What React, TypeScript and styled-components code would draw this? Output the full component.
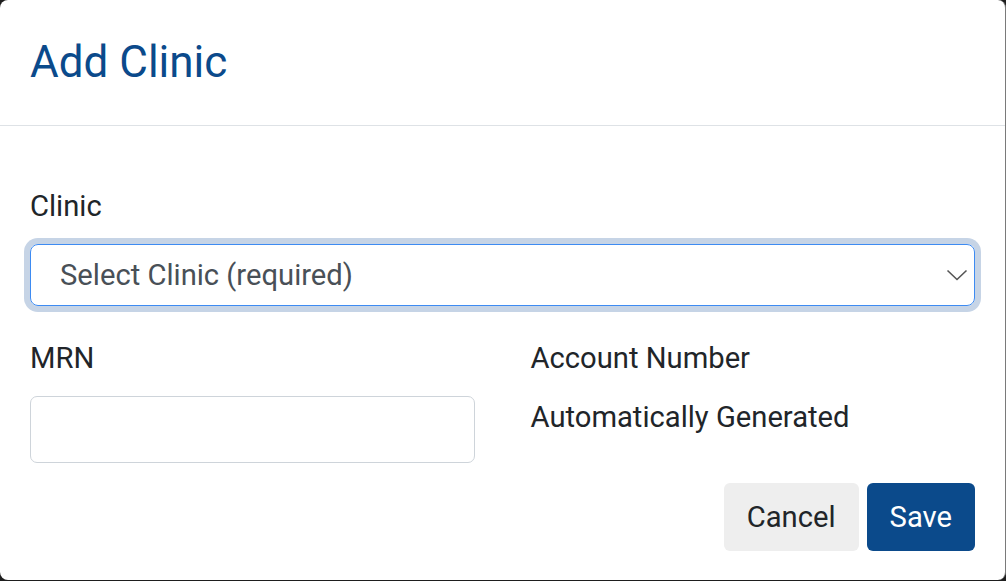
import styled, { createGlobalStyle } from "styled-components";

const GlobalStyle = createGlobalStyle`
  html, body {
    margin: 0;
    padding: 0;
    background: #1e1e1e;
  }
  body {
    font-family: Roboto, "Liberation Sans", Arial, sans-serif;
    color: #212529;
  }
  * {
    box-sizing: border-box;
  }
`;

const Backdrop = styled.div`
  width: 1006px;
  height: 581px;
  background: #1e1e1e;
`;

const Modal = styled.div`
  width: 1006px;
  height: 580px;
  background: #fff;
  border-right: 1px solid #7a7a7a;
  border-radius: 8px;
  display: flex;
  flex-direction: column;
  overflow: hidden;
`;

const Header = styled.div`
  height: 126px;
  padding: 36px 30px 0;
  border-bottom: 1px solid #dee2e6;
`;

const Title = styled.h2`
  margin: 0;
  font-size: 44px;
  font-weight: 400;
  line-height: 53px;
  color: #0b4a8b;
`;

const Body = styled.div`
  padding: 59px 30px 0 30px;
  display: flex;
  flex-direction: column;
`;

const Label = styled.label`
  display: block;
  font-size: 29.2px;
  line-height: 42px;
  color: #212529;
  margin-bottom: 17px;
`;

const SelectBox = styled.div`
  height: 62px;
  display: flex;
  align-items: center;
  justify-content: space-between;
  padding: 0 6px 0 29px;
  border: 1px solid #3d8bf2;
  border-radius: 8px;
  box-shadow: 0 0 0 6px #c6d4e6;
  font-size: 29.2px;
  color: #495057;
`;

const Row = styled.div`
  margin-top: 31px;
  display: grid;
  grid-template-columns: 1fr 1fr;
  column-gap: 56px;
`;

const Column = styled.div`
  display: flex;
  flex-direction: column;
`;

const TextInput = styled.input`
  height: 67px;
  width: 100%;
  border: 1px solid #ced4da;
  border-radius: 7px;
  padding: 0 29px;
  font-size: 29.2px;
  font-family: inherit;
  outline: none;
`;

const Plain = styled.div`
  font-size: 29.2px;
  line-height: 42px;
  color: #212529;
`;

const Footer = styled.div`
  margin-top: 20px;
  display: flex;
  justify-content: flex-end;
  gap: 8px;
`;

const Button = styled.button<{ $primary?: boolean }>`
  height: 68px;
  padding: 0 23px;
  border: none;
  border-radius: 6px;
  font-family: inherit;
  font-size: 29.2px;
  background: ${(p) => (p.$primary ? "#0b4a8b" : "#eeeeee")};
  color: ${(p) => (p.$primary ? "#ffffff" : "#212529")};
  cursor: pointer;
`;

const Chevron = () => (
  <svg width="22" height="12" viewBox="0 0 22 12" fill="none">
    <path d="M1.5 1.5 L11 10.5 L20.5 1.5" stroke="#555" strokeWidth="1.6" />
  </svg>
);

export default function App() {
  return (
    <>
      <GlobalStyle />
      <Backdrop>
        <Modal>
          <Header>
            <Title>Add Clinic</Title>
          </Header>
          <Body>
            <Label>Clinic</Label>
            <SelectBox>
              <span>Select Clinic (required)</span>
              <Chevron />
            </SelectBox>
            <Row>
              <Column>
                <Label>MRN</Label>
                <TextInput />
              </Column>
              <Column>
                <Label>Account Number</Label>
                <Plain>Automatically Generated</Plain>
              </Column>
            </Row>
            <Footer>
              <Button>Cancel</Button>
              <Button $primary>Save</Button>
            </Footer>
          </Body>
        </Modal>
      </Backdrop>
    </>
  );
}
